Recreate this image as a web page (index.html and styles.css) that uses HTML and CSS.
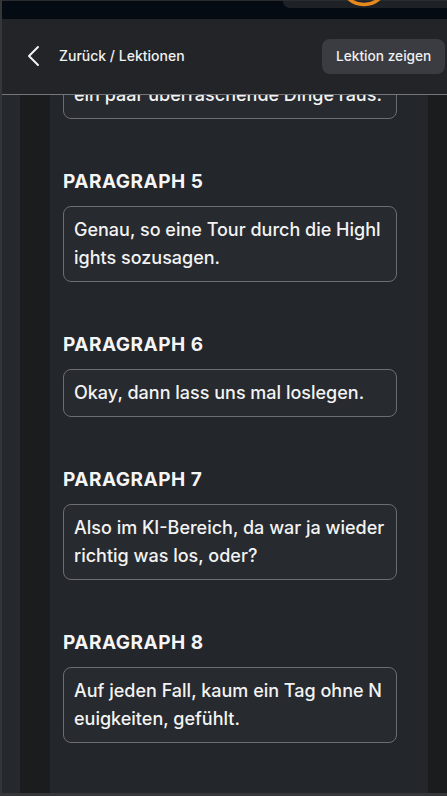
FILE: index.html
```html
<!DOCTYPE html>
<html lang="de">
<head>
<meta charset="utf-8">
<link rel="stylesheet" href="styles.css">
</head>
<body>
<div class="app">
  <div class="topbar">
    <div class="pill">
      <svg class="ring" width="40" height="8" viewBox="0 0 40 8"><circle cx="20" cy="-19" r="23.5" fill="none" stroke="#e8891e" stroke-width="3.4"/></svg>
    </div>
  </div>
  <header class="header">
    <div class="nav">
      <svg class="back" width="14" height="22" viewBox="0 0 14 22"><path d="M11 2 L2 11 L11 20" fill="none" stroke="#f2f2f2" stroke-width="2" stroke-linecap="round" stroke-linejoin="round"/></svg>
      <span class="crumb">Zurück / Lektionen</span>
    </div>
    <button class="show-btn">Lektion zeigen</button>
  </header>
  <main class="body">
    <div class="rail-a"></div>
    <div class="rail-b"></div>
    <div class="content">
      <div class="list">
        <div class="card"><span class="ln">ein paar überraschende Dinge raus.</span></div>
        <h2 class="heading">PARAGRAPH 5</h2>
        <div class="card"><span class="ln">Genau, so eine Tour durch die Highl</span><span class="ln">ights sozusagen.</span></div>
        <h2 class="heading">PARAGRAPH 6</h2>
        <div class="card"><span class="ln">Okay, dann lass uns mal loslegen.</span></div>
        <h2 class="heading">PARAGRAPH 7</h2>
        <div class="card"><span class="ln">Also im KI-Bereich, da war ja wieder</span><span class="ln">richtig was los, oder?</span></div>
        <h2 class="heading">PARAGRAPH 8</h2>
        <div class="card"><span class="ln">Auf jeden Fall, kaum ein Tag ohne N</span><span class="ln">euigkeiten, gefühlt.</span></div>
      </div>
    </div>
    <div class="rail-c"></div>
  </main>
</div>
</body>
</html>
```
FILE: styles.css
```css
html, body {
  margin: 0;
  padding: 0;
}
body {
  background: #353638;
  width: 447px;
  height: 796px;
  overflow: hidden;
  font-family: Inter, "Noto Sans", sans-serif;
  color: #f3f3f3;
}
.app {
  margin-left: 2px;
  height: 793px;
  display: flex;
  flex-direction: column;
  overflow: hidden;
}
.topbar {
  height: 19px;
  flex: none;
  background: #050b13;
  display: flex;
  justify-content: flex-end;
  border-top: 1px solid #2a2c30;
  box-sizing: border-box;
}
.pill {
  position: relative;
  width: 164px;
  height: 7px;
  background: #1e2227;
  border-bottom-left-radius: 9px;
}
.ring {
  position: absolute;
  left: 61px;
  top: -1px;
}
.header {
  height: 75px;
  flex: none;
  background: #222428;
  border-bottom: 1px solid #74767a;
  display: flex;
  align-items: center;
  justify-content: space-between;
  padding-right: 2px;
}
.nav {
  display: flex;
  align-items: center;
  padding-left: 25px;
  margin-top: -2px;
}
.back {
  display: block;
}
.crumb {
  margin-left: 18px;
  font-size: 14px;
  font-weight: 500;
  color: #f0f0f0;
}
.show-btn {
  height: 35px;
  width: 123px;
  border: none;
  border-radius: 8px;
  background: #3a3c41;
  color: #f0f0f0;
  font-family: inherit;
  font-size: 13.7px;
  font-weight: 500;
  padding: 0 0 0 14px;
  text-align: left;
  margin-top: -1px;
}
.body {
  flex: 1;
  display: flex;
  min-height: 0;
}
.rail-a {
  width: 18px;
  background: #25282c;
}
.rail-b {
  width: 30px;
  background: #1b1c1e;
}
.rail-c {
  width: 19px;
  background: #1b1c1e;
}
.content {
  width: 378px;
  background: #23262b;
  overflow: hidden;
  padding-left: 13px;
  box-sizing: border-box;
}
.list {
  margin-top: -24px;
  display: flex;
  flex-direction: column;
}
.card {
  width: 334px;
  box-sizing: border-box;
  border: 1px solid #6b6d71;
  border-radius: 8px;
  background: #272a2f;
  padding: 9px 10px;
  font-size: 18px;
  line-height: 28px;
  font-weight: 500;
  color: #f3f3f3;
}
.ln {
  display: block;
  white-space: nowrap;
}
.heading {
  margin: 51px 0 12px 0;
  font-size: 19px;
  line-height: 24px;
  font-weight: 700;
  letter-spacing: 0.5px;
  color: #f5f5f5;
}
```
